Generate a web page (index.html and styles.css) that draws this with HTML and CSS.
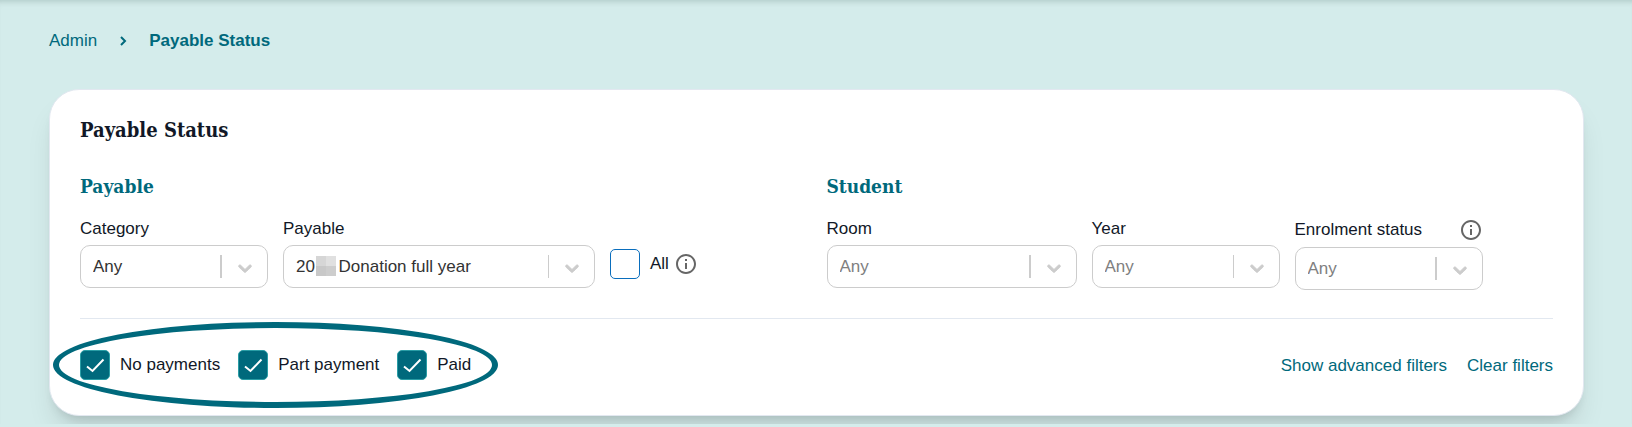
FILE: index.html
```html
<!DOCTYPE html>
<html lang="en">
<head>
<meta charset="utf-8">
<title>Payable Status</title>
<link rel="stylesheet" href="styles.css">
</head>
<body>
<svg class="defs" aria-hidden="true">
  <symbol id="chevron-down" viewBox="0 0 20 20"><path d="M4.516 7.548c0.436-0.446 1.043-0.481 1.576 0l3.908 3.747 3.908-3.747c0.533-0.481 1.141-0.446 1.574 0 0.436 0.445 0.408 1.197 0 1.615-0.406 0.418-4.695 4.502-4.695 4.502-0.217 0.223-0.502 0.335-0.787 0.335s-0.57-0.112-0.789-0.335c0 0-4.287-4.084-4.695-4.502s-0.436-1.17 0-1.615z" fill="currentColor" stroke="currentColor" stroke-width="0.8"/></symbol>
  <symbol id="info" viewBox="0 0 24 24"><path d="M11 7h2v2h-2zm0 4h2v6h-2zm1-9C6.48 2 2 6.48 2 12s4.480 10 10 10 10-4.480 10-10S17.520 2 12 2zm0 18c-4.410 0-8-3.590-8-8s3.590-8 8-8 8 3.590 8 8-3.590 8-8 8z" fill="currentColor"/></symbol>
  <symbol id="tick" viewBox="0 0 30 30"><path d="M7 16.500l5.500 4.500L23.500 9.500" fill="none" stroke="currentColor" stroke-width="2"/></symbol>
</svg>
<main class="page">
  <nav class="crumbs" aria-label="Breadcrumb">
    <a class="link" href="#">Admin</a>
    <svg class="crumb-arrow" viewBox="0 0 8 12" aria-hidden="true"><path d="M2 2l4 4-4 4" fill="none" stroke="currentColor" stroke-width="2"/></svg>
    <a class="link crumb-current" href="#" aria-current="page">Payable Status</a>
  </nav>
  <section class="card">
    <h1 class="title">Payable Status</h1>
    <div class="groups">
      <div class="group">
        <h2 class="subtitle">Payable</h2>
        <div class="fields">
          <div class="field field-md">
            <label class="label" for="category">Category</label>
            <span class="picker"><select class="select" id="category"><option>Any</option></select><svg class="chevron"><use href="#chevron-down"/></svg></span>
          </div>
          <div class="field field-xl">
            <label class="label" for="payable">Payable</label>
            <span class="picker"><select class="select select-thin" id="payable"><option>20&nbsp;&nbsp;&nbsp;&nbsp;&nbsp;Donation full year</option></select><span class="mask"></span><svg class="chevron"><use href="#chevron-down"/></svg></span>
          </div>
          <div class="all">
            <label class="check"><span class="box"><input class="tickbox" type="checkbox"><svg class="tick"><use href="#tick"/></svg></span>All</label>
            <svg class="info" role="img" aria-label="Information"><use href="#info"/></svg>
          </div>
        </div>
      </div>
      <div class="group">
        <h2 class="subtitle">Student</h2>
        <div class="fields">
          <div class="field field-lg">
            <label class="label" for="room">Room</label>
            <span class="picker"><select class="select select-empty" id="room"><option>Any</option></select><svg class="chevron"><use href="#chevron-down"/></svg></span>
          </div>
          <div class="field field-md">
            <label class="label" for="year">Year</label>
            <span class="picker"><select class="select select-empty select-thin" id="year"><option>Any</option></select><svg class="chevron"><use href="#chevron-down"/></svg></span>
          </div>
          <div class="field field-md">
            <div class="label-row"><label class="label" for="enrolment">Enrolment status</label><svg class="info" role="img" aria-label="Information"><use href="#info"/></svg></div>
            <span class="picker"><select class="select select-empty" id="enrolment"><option>Any</option></select><svg class="chevron"><use href="#chevron-down"/></svg></span>
          </div>
        </div>
      </div>
    </div>
    <div class="footer">
      <div class="checks">
        <label class="check"><span class="box"><input class="tickbox" type="checkbox" checked><svg class="tick"><use href="#tick"/></svg></span>No payments</label>
        <label class="check"><span class="box"><input class="tickbox" type="checkbox" checked><svg class="tick"><use href="#tick"/></svg></span>Part payment</label>
        <label class="check"><span class="box"><input class="tickbox" type="checkbox" checked><svg class="tick"><use href="#tick"/></svg></span>Paid</label>
        <span class="ring"></span>
      </div>
      <div class="actions">
        <a class="link" href="#">Show advanced filters</a>
        <a class="link" href="#">Clear filters</a>
      </div>
    </div>
  </section>
</main>
</body>
</html>
```
FILE: styles.css
```css
* { box-sizing: border-box; }
body {
  margin: 0;
  background: #d4eceb;
  box-shadow: inset 0 6px 6px -5px rgba(0, 40, 30, 0.2);
  color: #111827;
  font: 17px/22px "Liberation Sans", Arial, sans-serif;
}
.defs { display: none; }
.page { padding: 30px 48px 8px 49px; }
.link { color: #00697c; text-decoration: none; }
.crumbs { display: flex; align-items: center; gap: 22px; margin-bottom: 37px; }
.crumb-arrow { width: 8px; height: 12px; color: #00697c; }
.crumb-current { font-weight: 700; }
.card {
  padding: 25px 30px 35px;
  border: 1px solid #e2e8f0;
  border-radius: 30px;
  background: #fff;
  box-shadow: 0 20px 28px -5px rgba(0, 0, 0, 0.1), 0 8px 11px -6px rgba(0, 0, 0, 0.14);
}
.title, .subtitle {
  margin: 0;
  font-family: "DejaVu Serif Condensed", "DejaVu Serif", serif;
  line-height: 30px;
  font-weight: 700;
}
.title { font-size: 20px; }
.subtitle { font-size: 19px; color: #00697c; }
.groups {
  display: grid;
  grid-template-columns: 1fr 1fr;
  gap: 20px;
  padding: 26px 0 28px;
  border-bottom: 1px solid #e2e8f0;
}
.fields { display: flex; align-items: flex-start; gap: 15px; margin-top: 17px; }
.field { display: flex; flex-direction: column; gap: 5px; }
.field-md { width: 188px; }
.field-lg { width: 250px; }
.field-xl { width: 312px; }
.label-row { display: flex; align-items: center; justify-content: space-between; }
.picker { position: relative; display: block; }
.select {
  appearance: none;
  display: block;
  width: 100%;
  height: 43px;
  padding: 0 50px 0 12px;
  border: 1px solid #ccc;
  border-radius: 10px;
  background: linear-gradient(#ccc, #ccc) right 45px center / 2px 23px no-repeat #fff;
  color: #333;
  font: inherit;
}
.select-thin { background-size: 1px 23px; }
.select-empty { color: #808080; }
.chevron { position: absolute; right: 12px; top: 12px; width: 22px; height: 22px; color: #ccc; pointer-events: none; }
.mask {
  position: absolute;
  left: 33px;
  top: 11px;
  width: 20px;
  height: 20px;
  background: linear-gradient(90deg, #d6d6d6 50%, #e0e0e0 50%) top / 100% 50% no-repeat, linear-gradient(90deg, #c8c8c8 50%, #cdcdcd 50%);
}
.all { display: flex; align-items: center; gap: 5px; margin-top: 31px; }
.info { width: 24px; height: 24px; color: #666; }
.check { display: flex; align-items: center; gap: 10px; }
.box { position: relative; display: block; width: 30px; height: 30px; }
.tickbox {
  appearance: none;
  display: block;
  width: 30px;
  height: 30px;
  margin: 0;
  border: 1px solid #0a6ebd;
  border-radius: 5px;
  background: #fff;
}
.tickbox:checked { background: #00697c; border-color: #2a9da5; }
.tick { position: absolute; inset: 0; width: 30px; height: 30px; color: #fff; pointer-events: none; }
.footer { display: flex; align-items: center; justify-content: space-between; padding-top: 31px; }
.checks { position: relative; display: flex; gap: 18px; }
.ring {
  position: absolute;
  inset: -28px -27px;
  border: 6px solid #00697c;
  border-radius: 50%;
  pointer-events: none;
}
.actions { display: flex; gap: 20px; padding-top: 2px; }
```
